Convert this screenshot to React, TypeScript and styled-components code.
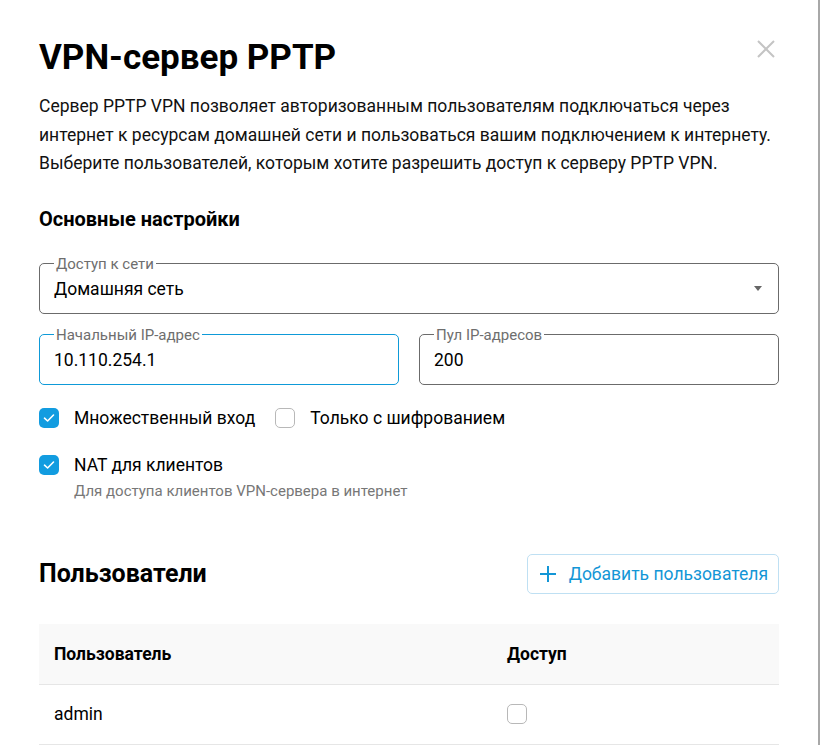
import React from "react";
import styled, { createGlobalStyle } from "styled-components";

const Global = createGlobalStyle`
  html, body { margin: 0; padding: 0; background: #fff; }
  body { font-family: Roboto, "Noto Sans", sans-serif; color: #000; }
  * { box-sizing: border-box; }
`;

const Dialog = styled.div`
  position: relative;
  width: 820px;
  height: 745px;
  overflow: hidden;
  border-right: 2px solid #a8a8a8;
  padding: 36px 0 0 39px;
`;

const Inner = styled.div`
  width: 740px;
`;

const CloseBtn = styled.button`
  position: absolute;
  top: 38px;
  right: 41px;
  width: 22px;
  height: 22px;
  padding: 0;
  border: none;
  background: none;
  cursor: pointer;
`;

const Title = styled.h1`
  margin: 0;
  font-size: 35px;
  line-height: 44px;
  font-weight: 700;
`;

const Description = styled.p`
  margin: 12px 0 0;
  font-size: 17.5px;
  line-height: 28.5px;
  color: #111;
`;

const SectionTitle = styled.h2`
  margin: 29px 0 0;
  font-size: 20px;
  line-height: 24px;
  font-weight: 700;
`;

const Field = styled.div`
  position: relative;
  height: 50px;
  padding: 0 15px;
  display: flex;
  align-items: center;
  gap: 8px;
`;

const Outline = styled.fieldset<{ $focused?: boolean }>`
  position: absolute;
  top: -7px;
  left: 0;
  right: 0;
  bottom: 0;
  margin: 0;
  padding: 0 14px;
  border: 1px solid ${(p) => (p.$focused ? "#0e9ad8" : "#6b6b6b")};
  border-radius: 5px;
  pointer-events: none;
  min-width: 0;
`;

const Legend = styled.legend`
  padding: 0 2px;
  font-size: 15px;
  line-height: 14px;
  color: #6e6e6e;
`;

const FieldValue = styled.div`
  flex: 1;
  font-size: 17.5px;
  line-height: 24px;
`;

const Arrow = styled.div`
  width: 0;
  height: 0;
  border-left: 4px solid transparent;
  border-right: 4px solid transparent;
  border-top: 5px solid #666;
  margin-right: 2px;
`;

const Fields = styled.div`
  display: flex;
  flex-direction: column;
  gap: 21px;
  margin-top: 33px;
`;

const FieldRow = styled.div`
  display: grid;
  grid-template-columns: 1fr 1fr;
  gap: 20px;
`;

const CheckRow = styled.div`
  display: flex;
  align-items: center;
  gap: 20px;
`;

const CheckItem = styled.label`
  display: flex;
  align-items: center;
  gap: 15px;
  font-size: 17.5px;
  line-height: 24px;
`;

const Box = styled.span<{ $checked?: boolean }>`
  width: 20px;
  height: 20px;
  border-radius: 5px;
  flex-shrink: 0;
  display: flex;
  align-items: center;
  justify-content: center;
  background: ${(p) => (p.$checked ? "#129ce0" : "#fff")};
  border: ${(p) => (p.$checked ? "none" : "1.5px solid #b8b8b8")};
`;

const Checks = styled.div`
  display: flex;
  flex-direction: column;
  gap: 23px;
  margin-top: 21px;
`;

const CheckBlock = styled.div`
  display: flex;
  flex-direction: column;
`;

const Hint = styled.div`
  margin: 5px 0 0 35px;
  font-size: 15px;
  line-height: 18px;
  color: #777;
`;

const UsersHeader = styled.div`
  display: flex;
  justify-content: space-between;
  align-items: center;
  margin-top: 54px;
`;

const UsersTitle = styled.h2`
  margin: 0;
  font-size: 25px;
  line-height: 30px;
  font-weight: 700;
`;

const AddButton = styled.button`
  display: flex;
  align-items: center;
  gap: 12px;
  height: 40px;
  padding: 0 10px 0 11px;
  border: 1px solid #bfe0f3;
  border-radius: 5px;
  background: #fff;
  color: #1396d6;
  font-family: Roboto, sans-serif;
  font-size: 17.5px;
  cursor: pointer;
`;

const Table = styled.div`
  margin-top: 30px;
`;

const Row = styled.div<{ $head?: boolean }>`
  display: grid;
  grid-template-columns: 453px 1fr;
  align-items: center;
  height: ${(p) => (p.$head ? "61px" : "60px")};
  padding-left: 15px;
  background: ${(p) => (p.$head ? "#f9f9f9" : "#fff")};
  border-bottom: 1px solid #e6e6e6;
  font-size: 17.5px;
  font-weight: ${(p) => (p.$head ? 700 : 400)};
`;

const Check = () => (
  <svg width="12" height="10" viewBox="0 0 12 10">
    <path d="M1.5 5.2 L4.6 8 L10.5 2" fill="none" stroke="#fff" strokeWidth="1.6" strokeLinecap="round" strokeLinejoin="round" />
  </svg>
);

export default function App() {
  return (
    <>
      <Global />
      <Dialog>
        <CloseBtn aria-label="close">
          <svg width="22" height="22" viewBox="0 0 22 22">
            <path d="M3 3 L19 19 M19 3 L3 19" stroke="#c4c4c4" strokeWidth="2" />
          </svg>
        </CloseBtn>
        <Inner>
          <Title>VPN-сервер PPTP</Title>
          <Description>
            Сервер PPTP VPN позволяет авторизованным пользователям подключаться через
            интернет к ресурсам домашней сети и пользоваться вашим подключением к интернету.
            Выберите пользователей, которым хотите разрешить доступ к серверу PPTP VPN.
          </Description>
          <SectionTitle>Основные настройки</SectionTitle>
          <Fields>
            <Field>
              <FieldValue>Домашняя сеть</FieldValue>
              <Arrow />
              <Outline><Legend>Доступ к сети</Legend></Outline>
            </Field>
            <FieldRow>
              <Field>
                <FieldValue>10.110.254.1</FieldValue>
                <Outline $focused><Legend>Начальный IP-адрес</Legend></Outline>
              </Field>
              <Field>
                <FieldValue>200</FieldValue>
                <Outline><Legend>Пул IP-адресов</Legend></Outline>
              </Field>
            </FieldRow>
          </Fields>
          <Checks>
            <CheckRow>
              <CheckItem>
                <Box $checked><Check /></Box>
                Множественный вход
              </CheckItem>
              <CheckItem>
                <Box />
                Только с шифрованием
              </CheckItem>
            </CheckRow>
            <CheckBlock>
              <CheckItem>
                <Box $checked><Check /></Box>
                NAT для клиентов
              </CheckItem>
              <Hint>Для доступа клиентов VPN-сервера в интернет</Hint>
            </CheckBlock>
          </Checks>
          <UsersHeader>
            <UsersTitle>Пользователи</UsersTitle>
            <AddButton>
              <svg width="18" height="18" viewBox="0 0 18 18">
                <path d="M9 1 V17 M1 9 H17" stroke="#1396d6" strokeWidth="2" />
              </svg>
              Добавить пользователя
            </AddButton>
          </UsersHeader>
          <Table>
            <Row $head>
              <span>Пользователь</span>
              <span>Доступ</span>
            </Row>
            <Row>
              <span>admin</span>
              <span><Box /></span>
            </Row>
          </Table>
        </Inner>
      </Dialog>
    </>
  );
}
